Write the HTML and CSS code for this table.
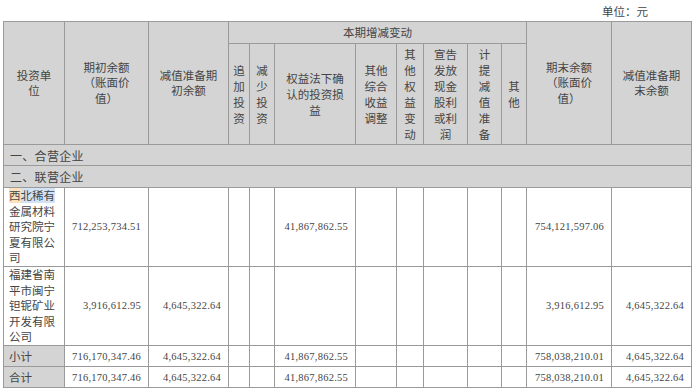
FILE: index.html
```html
<!DOCTYPE html>
<html lang="zh-CN">
<head>
<meta charset="utf-8">
<title>长期股权投资</title>
<link rel="stylesheet" href="styles.css">
</head>
<body>
<div class="unit">单位：元</div>
<table class="ledger">
  <colgroup>
    <col class="c-name"><col class="c-open"><col class="c-imp"><col class="c-add"><col class="c-red"><col class="c-eq"><col class="c-oci"><col class="c-oeq"><col class="c-div"><col class="c-prov"><col class="c-other"><col class="c-close"><col class="c-impend">
  </colgroup>
  <thead>
    <tr class="h1">
      <th rowspan="2">投资单<br>位</th>
      <th rowspan="2">期初余额<br>（账面价<br>值）</th>
      <th rowspan="2">减值准备期<br>初余额</th>
      <th colspan="8" class="group">本期增减变动</th>
      <th rowspan="2">期末余额<br>（账面价<br>值）</th>
      <th rowspan="2">减值准备期<br>末余额</th>
    </tr>
    <tr class="h2">
      <th>追<br>加<br>投<br>资</th>
      <th>减<br>少<br>投<br>资</th>
      <th>权益法下确<br>认的投资损<br>益</th>
      <th>其他<br>综合<br>收益<br>调整</th>
      <th>其<br>他<br>权<br>益<br>变<br>动</th>
      <th>宣告<br>发放<br>现金<br>股利<br>或利<br>润</th>
      <th>计<br>提<br>减<br>值<br>准<br>备</th>
      <th>其<br>他</th>
    </tr>
  </thead>
  <tbody>
    <tr class="section"><td colspan="13">一、合营企业</td></tr>
    <tr class="section s2"><td colspan="13">二、联营企业</td></tr>
    <tr class="entity">
      <td class="name"><span class="sel-a">西</span><span class="sel-b">北稀有</span>金属材料研究院宁夏有限公司</td>
      <td class="num">712,253,734.51</td>
      <td class="num"></td>
      <td></td><td></td>
      <td class="num">41,867,862.55</td>
      <td></td><td></td><td></td><td></td><td></td>
      <td class="num">754,121,597.06</td>
      <td class="num"></td>
    </tr>
    <tr class="entity">
      <td class="name">福建省南平市闽宁钽铌矿业开发有限公司</td>
      <td class="num">3,916,612.95</td>
      <td class="num">4,645,322.64</td>
      <td></td><td></td>
      <td class="num"></td>
      <td></td><td></td><td></td><td></td><td></td>
      <td class="num">3,916,612.95</td>
      <td class="num">4,645,322.64</td>
    </tr>
    <tr class="total">
      <td class="name shade">小计</td>
      <td class="num">716,170,347.46</td>
      <td class="num">4,645,322.64</td>
      <td></td><td></td>
      <td class="num">41,867,862.55</td>
      <td></td><td></td><td></td><td></td><td></td>
      <td class="num">758,038,210.01</td>
      <td class="num">4,645,322.64</td>
    </tr>
    <tr class="total">
      <td class="name shade">合计</td>
      <td class="num">716,170,347.46</td>
      <td class="num">4,645,322.64</td>
      <td></td><td></td>
      <td class="num">41,867,862.55</td>
      <td></td><td></td><td></td><td></td><td></td>
      <td class="num">758,038,210.01</td>
      <td class="num">4,645,322.64</td>
    </tr>
  </tbody>
</table>
</body>
</html>
```
FILE: styles.css
```css
html, body {
  margin: 0;
  padding: 0;
  background: #ffffff;
}
body {
  font-family: "Noto Sans CJK SC", "Liberation Serif", serif;
  color: #454545;
  font-size: 11.5px;
}
.unit {
  height: 21px;
  line-height: 22px;
  text-align: right;
  padding-right: 52px;
  font-size: 11.5px;
}
.ledger {
  margin-left: 3px;
  width: 688px;
  table-layout: fixed;
  border-collapse: collapse;
  border-left: 1px solid #6f6f6f;
  border-right: 1px solid #7a7a7a;
  border-top: 1px solid #c4c4c4;
}
.c-name { width: 61px; }
.c-open { width: 84px; }
.c-imp { width: 80px; }
.c-add { width: 21px; }
.c-red { width: 25px; }
.c-eq { width: 81px; }
.c-oci { width: 41px; }
.c-oeq { width: 27px; }
.c-div { width: 44px; }
.c-prov { width: 34px; }
.c-other { width: 25px; }
.c-close { width: 85px; }
.c-impend { width: 80px; }

.ledger th, .ledger td {
  border: 1px solid #9a9a9a;
  padding: 0;
  overflow: hidden;
}
.ledger th {
  background: #d4d4d4;
  font-weight: normal;
  text-align: center;
  vertical-align: middle;
  line-height: 15.5px;
  white-space: nowrap;
}
.ledger .h1 { height: 22px; }
.ledger .h1 th { line-height: 15.5px; }
.ledger .h2 { height: 101px; }
.ledger .h2 th { line-height: 16px; }

.section td {
  background: #d4d4d4;
  height: 20px;
  padding-left: 6px;
  font-size: 12px;
  letter-spacing: 0.3px;
  border-top: 1px solid #8c8c8c;
}
.section.s2 td { height: 21px; }

.entity { height: 79px; }
.entity td { line-height: 15.6px; height: 78px; }
.name {
  padding: 0 5px !important;
  text-align: left;
  vertical-align: middle;
}
.num {
  font-family: "Liberation Serif", serif;
  font-size: 10.5px;
  letter-spacing: 0.25px;
  text-align: right;
  padding-right: 7px !important;
  white-space: nowrap;
  vertical-align: middle;
}
.total { height: 21px; }
.total td { height: 20px; }
.shade { background: #d4d4d4; }

.sel-a { background: #fbe2bd; }
.sel-b { background: #d3e3f6; }
```
